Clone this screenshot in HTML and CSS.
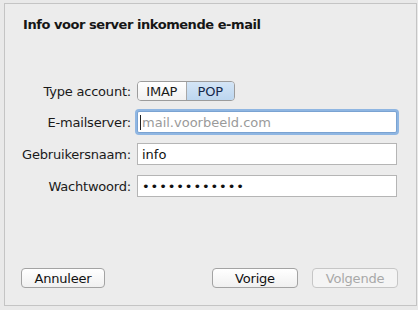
FILE: index.html
```html
<!DOCTYPE html>
<html lang="nl">
<head>
<meta charset="utf-8">
<title>Info voor server inkomende e-mail</title>
<link rel="stylesheet" href="styles.css">
</head>
<body>
<div class="sheet">
  <h1 class="title">Info voor server inkomende e-mail</h1>
  <div class="form">
    <label class="label">Type account:</label>
    <div class="segmented">
      <span class="seg">IMAP</span>
      <span class="seg seg-on">POP</span>
    </div>
    <label class="label">E-mailserver:</label>
    <div class="field field-focus"><span class="caret"></span><span class="placeholder">mail.voorbeeld.com</span></div>
    <label class="label">Gebruikersnaam:</label>
    <div class="field">info</div>
    <label class="label">Wachtwoord:</label>
    <div class="field dots">••••••••••••</div>
  </div>
  <div class="footer">
    <button class="btn btn-cancel">Annuleer</button>
    <div class="nav">
      <button class="btn">Vorige</button>
      <button class="btn btn-disabled">Volgende</button>
    </div>
  </div>
</div>
</body>
</html>
```
FILE: styles.css
```css
html, body {
  margin: 0;
  padding: 0;
  background: #e9e9e9;
}
body {
  font-family: "DejaVu Sans", "Liberation Sans", sans-serif;
  font-size: 13px;
  color: #111;
}
.sheet {
  margin: 3px 1px 0 4px;
  width: 411px;
  height: 301px;
  border: 1px solid #c4c4c4;
  background: #ececec;
  display: flex;
  flex-direction: column;
}
.title {
  margin: 13px 0 0 18px;
  font-size: 13px;
  line-height: 16px;
  font-weight: bold;
  letter-spacing: -0.45px;
  color: #161616;
}
.form {
  margin-top: 48px;
  display: grid;
  grid-template-columns: 126px 260px;
  column-gap: 6px;
  row-gap: 10px;
  align-items: center;
}
.label {
  text-align: right;
  font-size: 13px;
  letter-spacing: -0.2px;
  color: #1a1a1a;
}
.segmented {
  display: flex;
  width: 98px;
  height: 20px;
  border: 1px solid #9c9c9c;
  border-radius: 4px;
  overflow: hidden;
  box-sizing: border-box;
  justify-self: start;
}
.seg {
  flex: 1;
  display: flex;
  align-items: center;
  justify-content: center;
  font-size: 13px;
  letter-spacing: -0.2px;
  background: linear-gradient(#ffffff, #f1f1f1);
  color: #1a1a1a;
}
.seg + .seg {
  border-left: 1px solid #a8a8a8;
}
.seg-on {
  background: linear-gradient(#d4e5f6, #bcd6ef);
  color: #14284a;
}
.field {
  height: 22px;
  box-sizing: border-box;
  border: 1px solid #b5b5b5;
  background: #fff;
  display: flex;
  align-items: center;
  padding-left: 4px;
  font-size: 13px;
  color: #111;
}
.field-focus {
  border-color: #7aa3d2;
  box-shadow: 0 0 0 2px #8fb6e2;
  border-radius: 2px;
  padding-left: 2px;
}
.caret {
  width: 1px;
  height: 15px;
  background: #222;
  margin-right: 1px;
}
.placeholder {
  color: #9a9a9a;
}
.dots {
  letter-spacing: 0.9px;
  font-size: 13px;
}
.footer {
  margin-top: auto;
  margin-bottom: 17px;
  padding: 0 18px 0 16px;
  display: flex;
  justify-content: space-between;
}
.nav {
  display: flex;
  gap: 14px;
}
.btn {
  width: 86px;
  height: 20px;
  box-sizing: border-box;
  border: 1px solid #a3a3a3;
  border-radius: 4px;
  background: linear-gradient(#ffffff, #f0f0f0);
  font-family: "DejaVu Sans", "Liberation Sans", sans-serif;
  font-size: 13px;
  letter-spacing: -0.2px;
  color: #111;
  padding: 0;
}
.btn-cancel {
  width: 84px;
}
.btn-disabled {
  color: #a8a8a8;
  border-color: #c6c6c6;
  background: #f4f4f4;
}
```
